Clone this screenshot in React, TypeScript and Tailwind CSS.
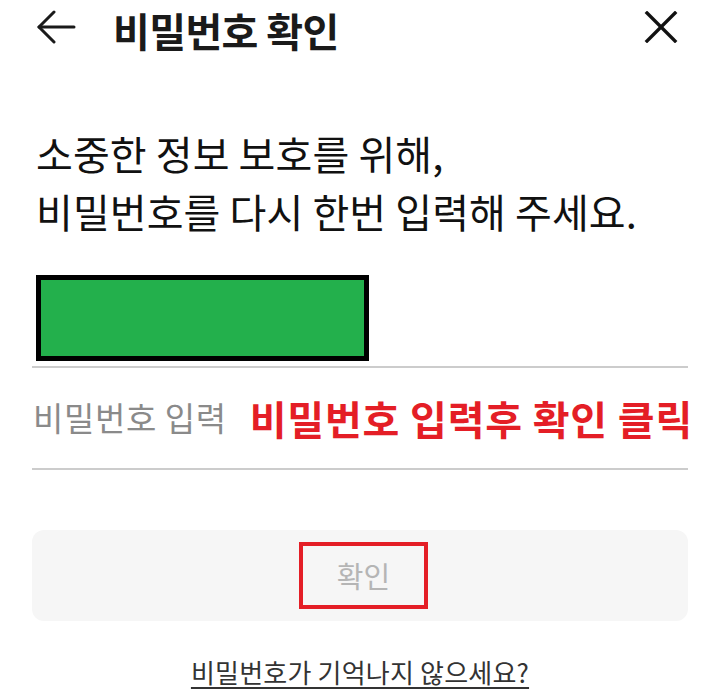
import React from 'react';

const font = { fontFamily: '"Noto Sans CJK KR", "Noto Sans", sans-serif' };

const BackIcon = () => (
  <svg width="40" height="34" viewBox="0 0 40 34" fill="none" stroke="#1a1a1a" strokeWidth="3" strokeLinecap="round" strokeLinejoin="round">
    <path d="M38 17H3" />
    <path d="M18 2L3 17L18 32" />
  </svg>
);

const CloseIcon = () => (
  <svg width="34" height="32" viewBox="0 0 34 32" fill="none" stroke="#111" strokeWidth="3.4" strokeLinecap="square">
    <path d="M3 2L31 30" />
    <path d="M31 2L3 30" />
  </svg>
);

const App = () => {
  return (
    <div className="w-[720px] h-[698px] bg-white overflow-hidden text-[#111]" style={font}>
      <div className="flex items-center h-[60px] pl-[36px] pr-[42px]">
        <div className="mb-[7px]">
          <BackIcon />
        </div>
        <h1 className="ml-[37px] text-[40px] font-bold leading-[60px] tracking-[-0.6px] text-[#1a1a1a] whitespace-nowrap">비밀번호 확인</h1>
        <div className="ml-auto mb-[6px]">
          <CloseIcon />
        </div>
      </div>

      <p className="mt-[64px] px-[36px] text-[40px] leading-[58px] text-[#111] tracking-[0.1px]">
        소중한 정보 보호를 위해,
        <br />
        비밀번호를 다시 한번 입력해 주세요.
      </p>

      <div className="ml-[36px] mt-[35px] w-[333px] h-[86px] border-[5px] border-black bg-[#23b04c]" />

      <div className="mx-[32px] mt-[5px] border-t-2 border-[#cccccc]">
        <div className="flex items-center h-[100px] pl-px whitespace-nowrap">
          <span className="shrink-0 text-[33px] text-[#8a8a8a] tracking-[0.6px]">비밀번호 입력</span>
          <span className="shrink-0 ml-[23px] text-[40px] font-bold text-[#e41e26] tracking-[0.8px]">비밀번호 입력후 확인 클릭</span>
        </div>
      </div>
      <div className="mx-[32px] border-t-2 border-[#cccccc]" />

      <div className="mx-[32px] mt-[60px] h-[91px] rounded-xl bg-[#f6f6f6] flex items-center justify-center">
        <div className="ml-[7px] w-[129px] h-[67px] border-4 border-[#e41e26] flex items-center justify-center">
          <span className="text-[29px] text-[#b5b5b5]">확인</span>
        </div>
      </div>

      <div className="flex justify-center mt-[38px]">
        <a className="text-[26px] leading-none text-[#333] underline underline-offset-4 tracking-[0.2px]">비밀번호가 기억나지 않으세요?</a>
      </div>
    </div>
  );
};

export default App;
